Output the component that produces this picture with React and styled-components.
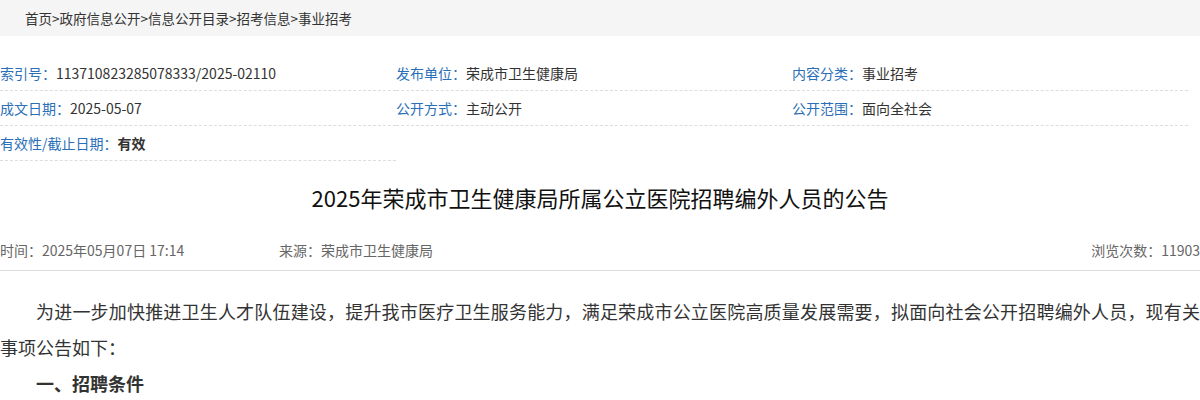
import React from "react";
import styled, { createGlobalStyle } from "styled-components";

const GlobalStyle = createGlobalStyle`
body {
  margin: 0;
  background: #ffffff;
  font-family: "Noto Sans CJK SC", "Noto Sans", sans-serif;
  color: #333333;
}
`

const Page = styled.div`
width: 1200px;
`
const Breadcrumb = styled.div`
height: 36px;
line-height: 36px;
background-color: #f5f5f5;
padding-left: 25px;
font-size: 13.5px;
color: #333;
`
const MetaTable = styled.div`
display: flex;
flex-wrap: wrap;
margin-top: 20px;
`
const MetaCell = styled.div`
width: 33%;
height: 34px;
line-height: 34px;
font-size: 14px;
border-bottom: 1px dashed #dddddd;
white-space: nowrap;
overflow: hidden;
`
const Label = styled.span`
color: #2a6fb7;
`
const Value = styled.span`
color: #333;
font-weight: ${(p) => (p.$bold ? 700 : 400)};
`
const Title = styled.h1`
margin: 16px 0 13px;
font-size: 22px;
font-weight: 400;
line-height: 40px;
text-align: center;
color: #111;
`
const InfoRow = styled.div`
display: flex;
height: 40px;
line-height: 40px;
font-size: 14px;
color: #666;
border-bottom: 1px solid #dddddd;
`
const InfoItem = styled.span`
width: ${(p) => p.$width || "auto"};
margin-left: ${(p) => (p.$right ? "auto" : "0")};
`
const Content = styled.div`
padding-top: 22px;
font-size: 18px;
line-height: 36px;
color: #333;
`
const Paragraph = styled.p`
margin: 0;
text-indent: 2em;
text-align: justify;
`
const Heading = styled.p`
margin: 0;
text-indent: 2em;
font-weight: 700;
`

const metas = [
  { label: "索引号：", value: "113710823285078333/2025-02110" },
  { label: "发布单位：", value: "荣成市卫生健康局" },
  { label: "内容分类：", value: "事业招考" },
  { label: "成文日期：", value: "2025-05-07" },
  { label: "公开方式：", value: "主动公开" },
  { label: "公开范围：", value: "面向全社会" },
  { label: "有效性/截止日期：", value: "有效", bold: true },
]

const App = () => {
  return (
    <Page>
      <GlobalStyle />
      <Breadcrumb>首页&gt;政府信息公开&gt;信息公开目录&gt;招考信息&gt;事业招考</Breadcrumb>

      <MetaTable>
        {metas.map((m) => (
          <MetaCell key={m.label}>
            <Label>{m.label}</Label>
            <Value $bold={m.bold}>{m.value}</Value>
          </MetaCell>
        ))}
      </MetaTable>

      <Title>2025年荣成市卫生健康局所属公立医院招聘编外人员的公告</Title>

      <InfoRow>
        <InfoItem $width="279px">时间：2025年05月07日 17:14</InfoItem>
        <InfoItem>来源：荣成市卫生健康局</InfoItem>
        <InfoItem $right>浏览次数：11903</InfoItem>
      </InfoRow>

      <Content>
        <Paragraph>
          为进一步加快推进卫生人才队伍建设，提升我市医疗卫生服务能力，满足荣成市公立医院高质量发展需要，拟面向社会公开招聘编外人员，现有关事项公告如下：
        </Paragraph>
        <Heading>一、招聘条件</Heading>
      </Content>
    </Page>
  );
}

export default App;
